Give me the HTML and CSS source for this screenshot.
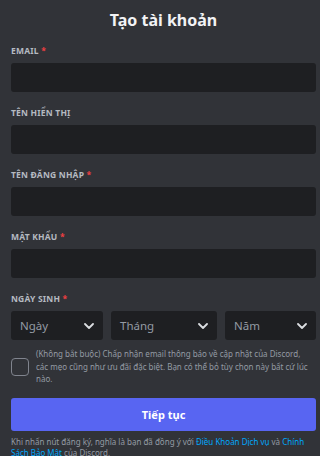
FILE: index.html
```html
<!DOCTYPE html>
<html lang="vi">
<head>
    <meta charset="UTF-8">
    <meta name="viewport" content="width=device-width, initial-scale=1.0">
    <title>Tạo tài khoản</title>
    <link rel="stylesheet" href="styles.css">
</head>
<body>
<div class="form">
    <h1 class="title">Tạo tài khoản</h1>

    <div class="field">
        <label class="label">Email <span class="req">*</span></label>
        <div class="input"></div>
    </div>

    <div class="field">
        <label class="label">Tên hiển thị</label>
        <div class="input"></div>
    </div>

    <div class="field">
        <label class="label">Tên đăng nhập <span class="req">*</span></label>
        <div class="input"></div>
    </div>

    <div class="field">
        <label class="label">Mật khẩu <span class="req">*</span></label>
        <div class="input"></div>
    </div>

    <div class="field">
        <label class="label">Ngày sinh <span class="req">*</span></label>
        <div class="dates">
            <div class="select day">Ngày
                <svg class="chev" viewBox="0 0 10 6" width="10" height="6"><path d="M1 1l4 4 4-4" fill="none" stroke="#dbdee1" stroke-width="1.8" stroke-linecap="round" stroke-linejoin="round"/></svg>
            </div>
            <div class="select month">Tháng
                <svg class="chev" viewBox="0 0 10 6" width="10" height="6"><path d="M1 1l4 4 4-4" fill="none" stroke="#dbdee1" stroke-width="1.8" stroke-linecap="round" stroke-linejoin="round"/></svg>
            </div>
            <div class="select year">Năm
                <svg class="chev" viewBox="0 0 10 6" width="10" height="6"><path d="M1 1l4 4 4-4" fill="none" stroke="#dbdee1" stroke-width="1.8" stroke-linecap="round" stroke-linejoin="round"/></svg>
            </div>
        </div>
    </div>

    <div class="check">
        <div class="box"></div>
        <p class="check-text">(Không bắt buộc) Chấp nhận email thông báo về cập nhật của Discord,<br>các mẹo cũng như ưu đãi đặc biệt. Bạn có thể bỏ tùy chọn này bất cứ lúc<br>nào.</p>
    </div>

    <button class="btn">Tiếp tục</button>

    <p class="terms">Khi nhấn nút đăng ký, nghĩa là bạn đã đồng ý với <a href="#">Điều Khoản Dịch vụ</a> và <a href="#">Chính Sách Bảo Mật</a> của Discord.</p>
</div>
</body>
</html>
```

FILE: styles.css
```css
body{
    margin: 0;
    background-color: #313338;
    font-family: "Noto Sans", "Open Sans", sans-serif;
}
.form{
    padding: 0 4px 0 11px;
    display: flex;
    flex-direction: column;
}
.title{
    margin: 0;
    height: 40px;
    line-height: 40px;
    text-align: center;
    color: #f2f3f5;
    font-size: 16px;
    font-weight: 700;
}
.field{
    display: flex;
    flex-direction: column;
    margin-top: 5px;
}
.field + .field{
    margin-top: 15px;
}
.label{
    height: 12px;
    line-height: 12px;
    margin-bottom: 6px;
    color: #b5bac1;
    font-size: 8.5px;
    font-weight: 700;
    text-transform: uppercase;
    letter-spacing: 0.2px;
}
.req{
    color: #f23f42;
}
.input{
    height: 29px;
    background-color: #1e1f22;
    border-radius: 3px;
}
.dates{
    display: flex;
    gap: 8px;
}
.select{
    height: 29px;
    background-color: #1e1f22;
    border-radius: 3px;
    display: flex;
    align-items: center;
    justify-content: space-between;
    padding: 0 9px;
    box-sizing: border-box;
    color: #949ba4;
    font-size: 11.5px;
}
.day{
    width: 92px;
}
.month{
    width: 106px;
}
.year{
    flex: 1;
}
.chev{
    display: block;
}
.check{
    display: flex;
    align-items: center;
    gap: 7px;
    margin-top: 8px;
}
.box{
    flex: none;
    width: 16px;
    height: 16px;
    border: 1px solid #80848e;
    border-radius: 4px;
}
.check-text{
    margin: 0;
    color: #949ba4;
    font-size: 8px;
    line-height: 12.5px;
}
.btn{
    margin-top: 12px;
    height: 33px;
    border: none;
    border-radius: 3px;
    background-color: #5865f2;
    color: #ffffff;
    font-family: "Noto Sans", "Open Sans", sans-serif;
    font-size: 11px;
    font-weight: 700;
}
.terms{
    margin: 5px 0 0;
    color: #949ba4;
    font-size: 8px;
    line-height: 11.5px;
}
.terms a{
    color: #00a8fc;
    text-decoration: none;
}
```
